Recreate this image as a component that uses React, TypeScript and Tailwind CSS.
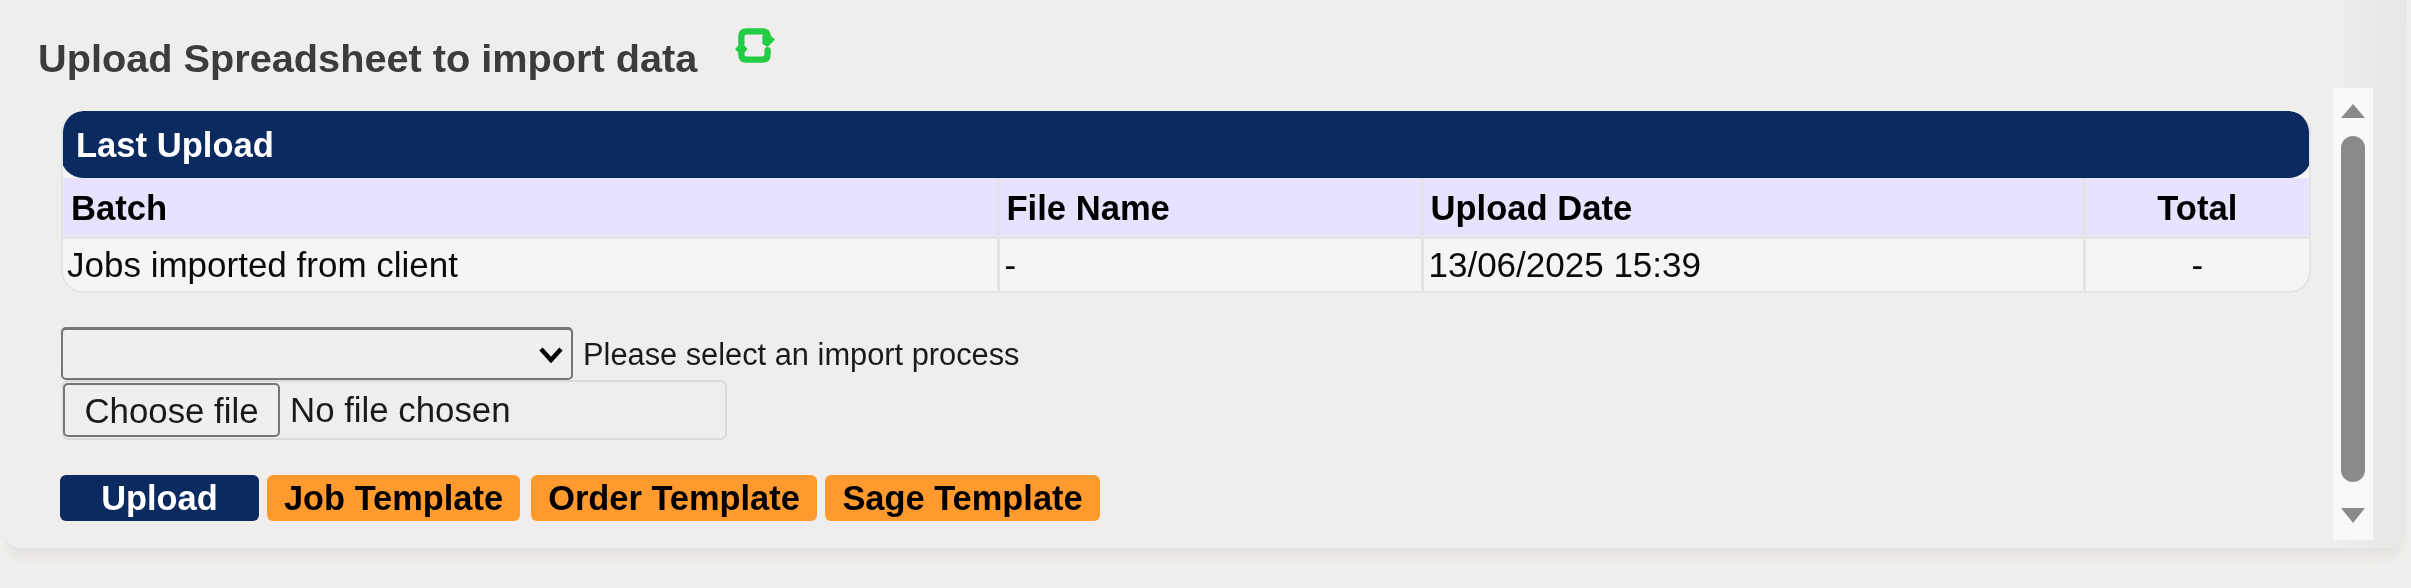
export default function App() {
  const font = "font-['Liberation_Sans',Arial,sans-serif]";
  return (
    <div className={`w-[2411px] h-[588px] overflow-hidden bg-[#f0efed] pl-[3px] pr-[4px] ${font}`}>
      <div className="blur-[0.65px] h-[548px] flex flex-col bg-[linear-gradient(90deg,#efeeec_97%,#e8e6e4)] rounded-b-[20px] shadow-[0_14px_10px_-4px_#e5e3e1] pl-[35px]">
        <div className="flex items-start h-[88px]">
          <h1 className="mt-[33px] text-[39.7px] leading-[50px] font-bold text-[#3c3c3c] whitespace-nowrap">Upload Spreadsheet to import data</h1>
          <svg className="ml-[37px] mt-[25px]" width="42" height="40" viewBox="0 0 40 38" fill="none">
            <path d="M7 17V11Q7 6 12 6H27Q32 6 32 11V14" stroke="#22cc44" strokeWidth="6" strokeLinecap="round" />
            <path d="M27 10L33 8L39 14L32 21L27 18Z" fill="#22cc44" />
            <path d="M32 24V28Q32 33 27 33H12Q7 33 7 28V24" stroke="#22cc44" strokeWidth="6" strokeLinecap="round" />
            <path d="M1 23L7 16L13 23L7 29Z" fill="#22cc44" />
          </svg>
        </div>
        <div className="flex items-start flex-1 min-h-0">
          <div className="w-[2295px] h-[452px] pl-[23px] pr-[22px] pt-[23px] flex flex-col">
            <div className="rounded-b-[22px] rounded-t-[22px] overflow-hidden border-b-2 border-x-2 border-[#e4e4e4] bg-[#f5f5f5] text-[34.6px] text-black">
              <div className="h-[67px] -mx-[2px] rounded-[22px] bg-[#0a2a60] text-white font-bold pl-[15px] pt-[2px] flex items-center">
                Last Upload
              </div>
              <table className="w-full table-fixed border-collapse">
                <colgroup>
                  <col className="w-[935px]" />
                  <col className="w-[424px]" />
                  <col className="w-[662px]" />
                  <col />
                </colgroup>
                <thead>
                  <tr className="h-[59px] bg-[#e8e2fe] border-b-[3px] border-[#e4e4e4] font-bold">
                    <th className="text-left pl-[8px] pt-[5px] font-bold">Batch</th>
                    <th className="text-left pl-[7px] pt-[5px] font-bold border-l-[3px] border-[#e4e4e4]">File Name</th>
                    <th className="text-left pl-[7px] pt-[5px] font-bold border-l-[3px] border-[#e4e4e4]">Upload Date</th>
                    <th className="text-center pt-[5px] font-bold border-l-[3px] border-[#e4e4e4]">Total</th>
                  </tr>
                </thead>
                <tbody>
                  <tr className="h-[53px] text-[35px] text-[#0a0a0a]">
                    <td className="pl-[4px]">Jobs imported from client</td>
                    <td className="pl-[5px] border-l-[3px] border-[#e4e4e4]">-</td>
                    <td className="pl-[5px] border-l-[3px] border-[#e4e4e4]">13/06/2025 15:39</td>
                    <td className="text-center border-l-[3px] border-[#e4e4e4]">-</td>
                  </tr>
                </tbody>
              </table>
            </div>
            <div className="mt-[33px] flex items-center h-[54px]">
              <div className="relative w-[512px] h-[53px]">
                <select className="w-full h-full rounded-[5px] border-2 border-t-[3px] border-[#767676] bg-[#efefef] appearance-none">
                  <option></option>
                </select>
                <svg className="absolute left-[478px] top-[20px]" width="24" height="16" viewBox="0 0 24 16" fill="none">
                  <path d="M2 2L12 13L22 2" stroke="#000000" strokeWidth="4.5" />
                </svg>
              </div>
              <span className="ml-[10px] text-[30.8px] text-[#1a1a1a] mt-[4px]">Please select an import process</span>
            </div>
            <div className="w-[665px] h-[60px] ml-[1px] flex items-center rounded-[6px] border-2 border-[#dadada] text-[34.8px] text-[#1a1a1a]">
              <button className="ml-[-1px] w-[217px] h-[54px] rounded-[5px] border-2 border-[#767676] bg-[#efefef]">Choose file</button>
              <span className="ml-[10px]">No file chosen</span>
            </div>
            <div className="mt-[35px] ml-[-1px] flex text-[34.4px] font-bold leading-none h-[46px]">
              <button className="w-[199px] rounded-[6px] bg-[#0a2a60] text-white">Upload</button>
              <button className="ml-[8px] w-[253px] rounded-[6px] bg-[#ff9a2e] text-black">Job Template</button>
              <button className="ml-[11px] w-[286px] rounded-[6px] bg-[#ff9a2e] text-black">Order Template</button>
              <button className="ml-[8px] w-[275px] rounded-[6px] bg-[#ff9a2e] text-black">Sage Template</button>
            </div>
          </div>
          <div className="w-[40px] h-[452px] bg-[#f9f9f9] flex flex-col items-center">
            <svg className="mt-[16px]" width="24" height="14" viewBox="0 0 24 14"><path d="M12 0L24 14H0Z" fill="#8a8a8a" /></svg>
            <div className="mt-[18px] w-[24px] h-[346px] rounded-full bg-[#8a8a8a]" />
            <svg className="mt-[26px]" width="24" height="15" viewBox="0 0 24 15"><path d="M0 0H24L12 15Z" fill="#8a8a8a" /></svg>
          </div>
        </div>
      </div>
    </div>
  );
}
